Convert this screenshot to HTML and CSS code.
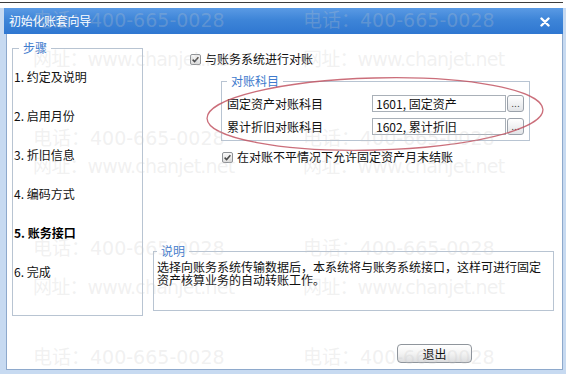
FILE: index.html
```html
<!DOCTYPE html>
<html lang="zh-CN">
<head>
<meta charset="utf-8">
<title>初始化账套向导</title>
<link rel="stylesheet" href="styles.css">
</head>
<body>
<div class="screen">
  <div class="topline"></div>
  <div class="window">
    <div class="titlebar">
      <span class="title">初始化账套向导</span>
      <svg class="close" width="10" height="10" viewBox="0 0 10 10"><path d="M1.5 1.5 L8.5 8.5 M8.5 1.5 L1.5 8.5" stroke="#fff" stroke-width="2.4" stroke-linecap="round"/></svg>
    </div>
    <div class="panel">
      <fieldset class="steps">
        <legend>步骤</legend>
        <ol class="step-list">
          <li>1. 约定及说明</li>
          <li>2. 启用月份</li>
          <li>3. 折旧信息</li>
          <li>4. 编码方式</li>
          <li class="current">5. 账务接口</li>
          <li>6. 完成</li>
        </ol>
      </fieldset>
      <div class="main">
        <label class="check check-sync">
          <svg class="box" width="11" height="11" viewBox="0 0 11 11"><defs><linearGradient id="cb1" x1="0" y1="0" x2="0" y2="1"><stop offset="0" stop-color="#fafafa"/><stop offset="1" stop-color="#dcdcdc"/></linearGradient></defs><rect x="0.5" y="0.5" width="10" height="10" rx="1.5" fill="url(#cb1)" stroke="#8f9296"/><path d="M2.6 5.6 L4.6 7.6 L8.4 3.2" fill="none" stroke="#4a4a4a" stroke-width="1.5"/></svg>
          <span>与账务系统进行对账</span>
        </label>
        <fieldset class="accounts">
          <legend>对账科目</legend>
          <div class="acc-row">
            <span class="acc-label">固定资产对账科目</span>
            <span class="acc-input">1601, 固定资产</span>
            <span class="dots">...</span>
          </div>
          <div class="acc-row">
            <span class="acc-label">累计折旧对账科目</span>
            <span class="acc-input">1602, 累计折旧</span>
            <span class="dots">...</span>
          </div>
        </fieldset>
        <label class="check check-close">
          <svg class="box" width="11" height="11" viewBox="0 0 11 11"><defs><linearGradient id="cb2" x1="0" y1="0" x2="0" y2="1"><stop offset="0" stop-color="#fafafa"/><stop offset="1" stop-color="#dcdcdc"/></linearGradient></defs><rect x="0.5" y="0.5" width="10" height="10" rx="1.5" fill="url(#cb2)" stroke="#8f9296"/><path d="M2.6 5.6 L4.6 7.6 L8.4 3.2" fill="none" stroke="#4a4a4a" stroke-width="1.5"/></svg>
          <span>在对账不平情况下允许固定资产月末结账</span>
        </label>
        <fieldset class="notes">
          <legend>说明</legend>
          <p>选择向账务系统传输数据后，本系统将与账务系统接口，这样可进行固定资产核算业务的自动转账工作。</p>
        </fieldset>
        <div class="actions">
          <button class="btn" type="button">退出</button>
        </div>
      </div>
    </div>
  </div>

  <svg class="annotation" width="567" height="377" viewBox="0 0 567 377">
    <ellipse cx="375" cy="114" rx="168" ry="36" transform="rotate(-1.5 375 114)" fill="none" stroke="#c25563" stroke-width="1.3" opacity="0.85"/>
  </svg>

  <div class="watermark">
    <div class="wm wm-a1"><span>电话：400-665-0028</span><span>电话：400-665-0028</span></div>
    <div class="wm wm-b1"><span>网址：www.chanjet.net</span><span>网址：www.chanjet.net</span></div>
    <div class="wm wm-a2"><span>电话：400-665-0028</span><span>电话：400-665-0028</span></div>
    <div class="wm wm-b2"><span>网址：www.chanjet.net</span><span>网址：www.chanjet.net</span></div>
    <div class="wm wm-a3"><span>电话：400-665-0028</span><span>电话：400-665-0028</span></div>
    <div class="wm wm-b3"><span>网址：www.chanjet.net</span><span>网址：www.chanjet.net</span></div>
    <div class="wm wm-a4"><span>电话：400-665-0028</span><span>电话：400-665-0028</span></div>
  </div>
</div>
</body>
</html>
```

FILE: styles.css
```css
html, body {
  margin: 0;
  padding: 0;
  background: #ffffff;
}

.screen {
  position: relative;
  width: 567px;
  height: 377px;
  overflow: hidden;
  font-family: "Noto Sans CJK SC", "Noto Sans", sans-serif;
  font-size: 12px;
  color: #111;
}

.topline {
  margin-top: 2px;
  width: 563px;
  height: 1px;
  background: #3c3c3c;
}

.window {
  margin-top: 5px;
  width: 566px;
  height: 366px;
  background: #c7daf1;
}

.titlebar {
  margin-left: 4px;
  width: 559px;
  height: 26px;
  box-sizing: border-box;
  padding: 0 13px 0 5px;
  display: flex;
  align-items: center;
  justify-content: space-between;
  background: linear-gradient(to bottom, #5a9ae4 0%, #3e85d8 45%, #2f77d1 100%);
  color: #fff;
}

.title {
  font-size: 12px;
  line-height: 16px;
  letter-spacing: -0.3px;
}

.close {
  display: block;
  margin-top: 1px;
}

.panel {
  margin-left: 6px;
  width: 557px;
  height: 336px;
  box-sizing: border-box;
  border: 1px solid #8ea9cc;
  border-top: none;
  background: #fff;
  padding: 6px 7px 0 5px;
  display: grid;
  grid-template-columns: 131px 1fr;
  column-gap: 10px;
  align-items: start;
}

fieldset {
  margin: 0;
  min-width: 0;
  border: 1px solid #b8c4d2;
}

legend {
  font-size: 12px;
  line-height: 16px;
  color: #3f7bcd;
  padding: 0 4px;
}

.steps {
  box-sizing: border-box;
  width: 131px;
  height: 276px;
  padding: 13px 0 0 1px;
}

.steps legend {
  margin-left: 5px;
}

.step-list {
  list-style: none;
  margin: 0;
  padding: 0;
  display: flex;
  flex-direction: column;
  gap: 23px;
}

.step-list li {
  line-height: 16px;
  white-space: nowrap;
  color: #111;
}

.step-list .current {
  font-weight: bold;
  color: #000;
}

.main {
  display: flex;
  flex-direction: column;
  align-items: flex-start;
}

.check {
  display: flex;
  align-items: center;
  gap: 4px;
  line-height: 16px;
  color: #111;
}

.check .box {
  display: block;
  flex: none;
}

.check-sync {
  margin: 11px 0 0 37px;
}

.accounts {
  box-sizing: border-box;
  width: 309px;
  margin: 6px 0 0 68px;
  padding: 6px 5px 5px 5px;
}

.accounts legend {
  margin-left: 0;
}

.acc-row {
  display: flex;
  align-items: center;
  height: 17px;
}

.acc-row + .acc-row {
  margin-top: 6px;
}

.acc-label {
  width: 145px;
  line-height: 16px;
  flex: none;
}

.acc-input {
  box-sizing: border-box;
  width: 134px;
  height: 17px;
  border: 1px solid #a9b0b8;
  padding-left: 3px;
  line-height: 15px;
  font-size: 12px;
  color: #111;
  white-space: nowrap;
  overflow: hidden;
}

.dots {
  box-sizing: border-box;
  width: 17px;
  height: 17px;
  margin-left: 1px;
  border: 1px solid #9aa1aa;
  border-radius: 3px;
  background: linear-gradient(to bottom, #ffffff, #e2e4e7);
  font-family: "DejaVu Sans", sans-serif;
  font-size: 9px;
  line-height: 16px;
  text-align: center;
  color: #333;
}

.check-close {
  margin: 8px 0 0 69px;
}

.notes {
  box-sizing: border-box;
  width: 401px;
  height: 68px;
  margin: 78px 0 0 0;
  padding: 1px 10px 0 3px;
}

.notes legend {
  margin-left: 0;
}

.notes p {
  margin: 0;
  line-height: 13px;
  color: #111;
}

.actions {
  margin: 33px 0 0 244px;
}

.btn {
  display: block;
  width: 75px;
  height: 19px;
  margin: 0;
  padding: 0;
  border: 1px solid #8f959c;
  border-radius: 4px;
  background: linear-gradient(to bottom, #ffffff 0%, #f3f3f3 50%, #dcdddf 100%);
  font-family: "Noto Sans CJK SC", sans-serif;
  font-size: 12px;
  line-height: 16px;
  color: #111;
}

.annotation {
  position: absolute;
  left: 0;
  top: 0;
  pointer-events: none;
}

.watermark {
  position: absolute;
  left: 0;
  top: 0;
  width: 567px;
  height: 377px;
  pointer-events: none;
  font-family: "DejaVu Sans", "Noto Sans CJK SC", sans-serif;
  font-size: 19px;
  line-height: 22px;
  color: rgba(200, 200, 200, 0.26);
}

.wm {
  position: absolute;
  left: 33px;
  display: flex;
  white-space: nowrap;
}

.wm span {
  width: 270px;
  flex: none;
}

.wm-b1 span, .wm-b2 span, .wm-b3 span {
  letter-spacing: -0.8px;
}

.wm-a1 { top: 9px; }
.wm-b1 { top: 48px; }
.wm-a2 { top: 127px; }
.wm-b2 { top: 155px; }
.wm-a3 { top: 237px; }
.wm-b3 { top: 276px; }
.wm-a4 { top: 346px; }
```
